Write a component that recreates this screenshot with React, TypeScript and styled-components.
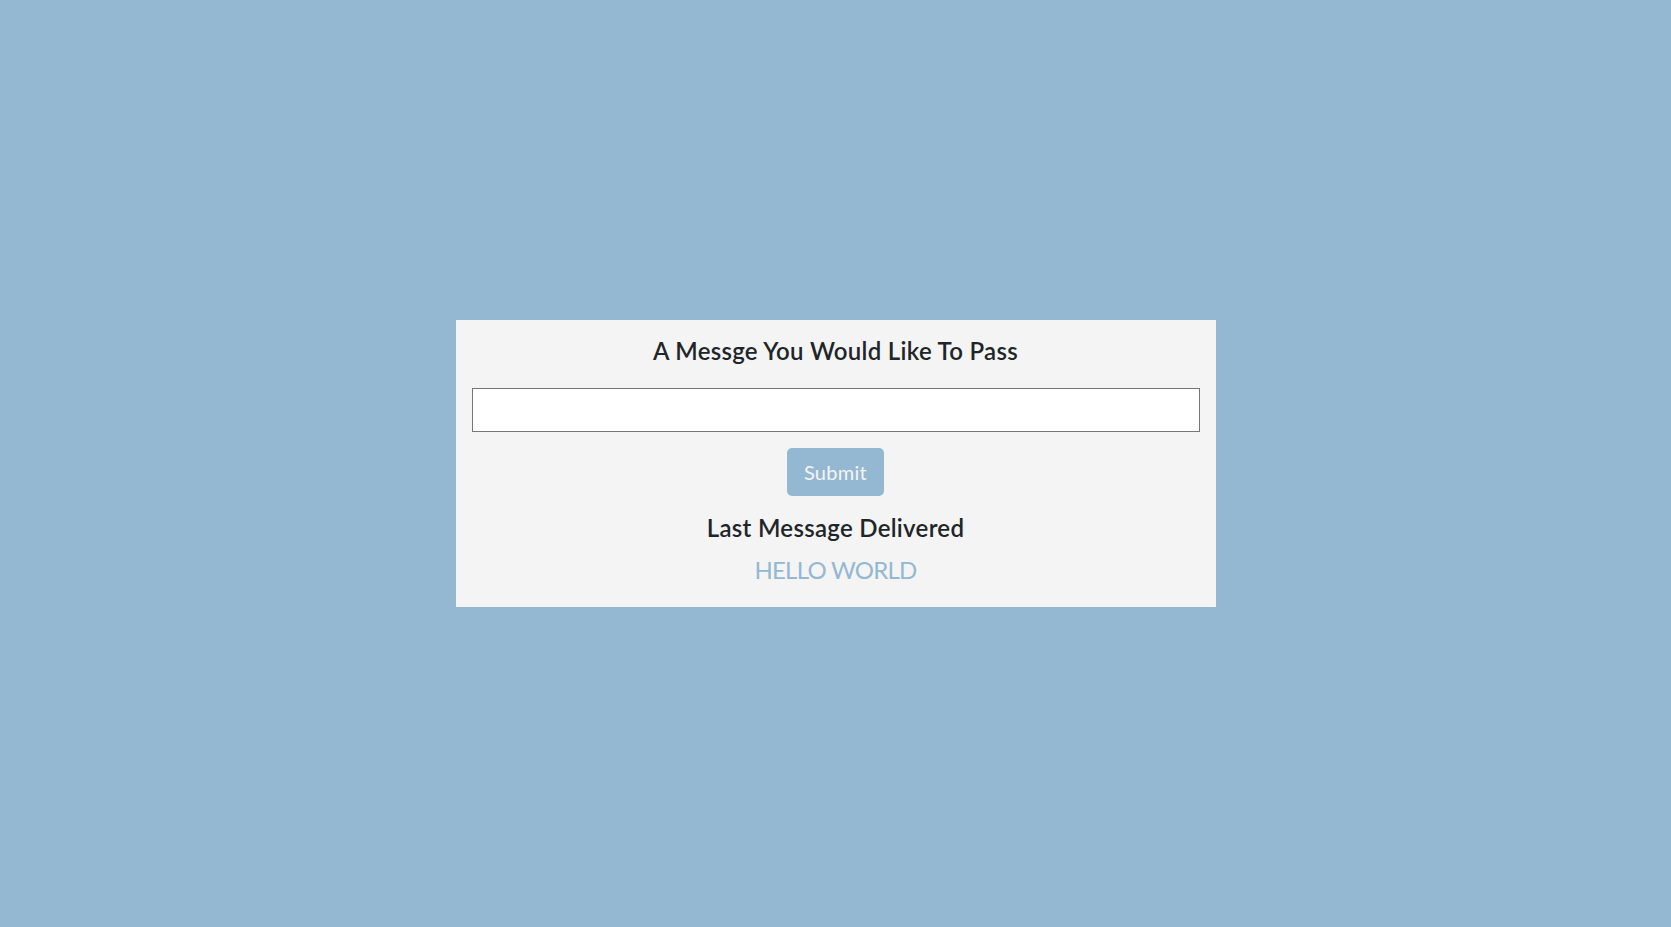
import React from "react";
import styled, { createGlobalStyle } from "styled-components";

const Global = createGlobalStyle`
  html, body { margin: 0; padding: 0; }
  body {
    background: #94b8d1;
    font-family: Lato, "Open Sans", sans-serif;
    color: #212529;
  }
`;

const Page = styled.main`
  min-height: 100vh;
  display: flex;
  align-items: center;
  justify-content: center;
`;

const Card = styled.section`
  width: 760px;
  box-sizing: border-box;
  background: #f4f4f4;
  padding: 17px 16px 22px;
  display: flex;
  flex-direction: column;
  align-items: center;
`;

const Heading = styled.h4<{ $gap?: number }>`
  margin: ${(p) => p.$gap ?? 0}px 0 0;
  font-size: 24px;
  line-height: 1.2;
  font-weight: 600;
  letter-spacing: 0.3px;
  text-align: center;
`;

const Input = styled.input`
  margin-top: 22px;
  width: 100%;
  height: 44px;
  box-sizing: border-box;
  border: 1px solid #767676;
  background: #fff;
  border-radius: 0;
  font-size: 16px;
  padding: 0 8px;
`;

const Button = styled.button`
  margin-top: 16px;
  height: 48px;
  width: 97px;
  border: none;
  border-radius: 5px;
  background: #94b8d1;
  color: #f4f4f4;
  font-family: Lato, "Open Sans", sans-serif;
  font-size: 20px;
  letter-spacing: 0.3px;
  cursor: pointer;
`;

const Message = styled.p`
  margin: 14px 0 0;
  font-size: 24px;
  line-height: 1.2;
  letter-spacing: -0.75px;
  color: #94b8d1;
  text-align: center;
`;

export default function App() {
  return (
    <>
      <Global />
      <Page>
        <Card>
          <Heading>A Messge You Would Like To Pass</Heading>
          <Input type="text" />
          <Button type="button">Submit</Button>
          <Heading $gap={18}>Last Message Delivered</Heading>
          <Message>HELLO WORLD</Message>
        </Card>
      </Page>
    </>
  );
}
